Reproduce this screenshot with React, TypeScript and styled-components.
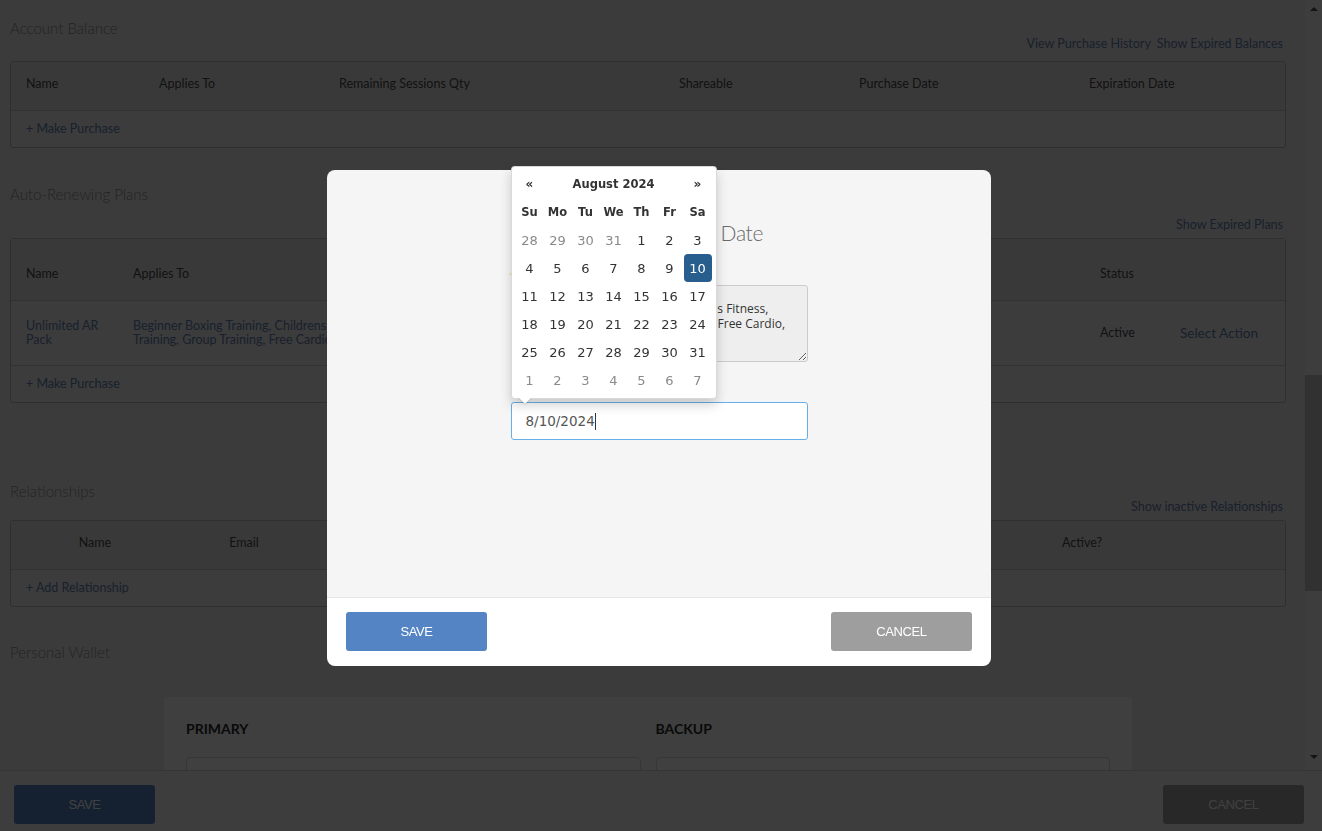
import styled, { createGlobalStyle } from 'styled-components'

const GlobalStyle = createGlobalStyle`
  * { box-sizing: border-box; }
  html, body { margin: 0; padding: 0; height: 100%; overflow: hidden; }
  body { font-family: Lato, "Liberation Sans", sans-serif; background: #ebebeb; }
`

const linkColor = '#5f82b2'

const weeks: number[][] = [
  [28, 29, 30, 31, 1, 2, 3],
  [4, 5, 6, 7, 8, 9, 10],
  [11, 12, 13, 14, 15, 16, 17],
  [18, 19, 20, 21, 22, 23, 24],
  [25, 26, 27, 28, 29, 30, 31],
  [1, 2, 3, 4, 5, 6, 7]
]
const dow = ['Su', 'Mo', 'Tu', 'We', 'Th', 'Fr', 'Sa']

function isOther(week: number, day: number) {
  return (week === 0 && day > 20) || (week === 5 && day < 8)
}

export default function App() {
  return (
    <>
      <GlobalStyle />
      <Page>
        <Main>
          <Content>
            <SectionHead $h={34}>
              <SectionTitle>Account Balance</SectionTitle>
              <HeadLinks>
                <Link>View Purchase History</Link>
                <Link>Show Expired Balances</Link>
              </HeadLinks>
            </SectionHead>
            <Table $mt={9}>
              <Row $cols="133px 180px 340px 180px 230px 1fr" $h={49} $head $pb={5}>
                <Cell>Name</Cell>
                <Cell>Applies To</Cell>
                <Cell>Remaining Sessions Qty</Cell>
                <Cell>Shareable</Cell>
                <Cell>Purchase Date</Cell>
                <Cell>Expiration Date</Cell>
              </Row>
              <Row $cols="1fr" $h={36}>
                <Cell $link>+ Make Purchase</Cell>
              </Row>
            </Table>

            <SectionHead $h={49} $mt={36}>
              <SectionTitle>Auto-Renewing Plans</SectionTitle>
              <HeadLinks>
                <Link>Show Expired Plans</Link>
              </HeadLinks>
            </SectionHead>
            <Table $mt={5}>
              <Row $cols="107px 967px 80px 1fr" $h={62} $head $pt={8}>
                <Cell>Name</Cell>
                <Cell>Applies To</Cell>
                <Cell>Status</Cell>
                <Cell />
              </Row>
              <Row $cols="107px 967px 80px 1fr" $h={65}>
                <Cell $link>
                  Unlimited AR
                  <br />
                  Pack
                </Cell>
                <Cell $link>
                  Beginner Boxing Training, Childrens Fitness, Personal
                  <br />
                  Training, Group Training, Free Cardio, Open Gym
                </Cell>
                <Cell>Active</Cell>
                <Cell $link $size={13.5}>
                  Select Action
                </Cell>
              </Row>
              <Row $cols="1fr" $h={36}>
                <Cell $link>+ Make Purchase</Cell>
              </Row>
            </Table>

            <SectionHead $h={34} $mt={78}>
              <SectionTitle>Relationships</SectionTitle>
              <HeadLinks>
                <Link>Show inactive Relationships</Link>
              </HeadLinks>
            </SectionHead>
            <Table $mt={5}>
              <Row $cols="168px 130px 713px 120px 1fr" $h={49} $head $pb={5}>
                <Cell $center>Name</Cell>
                <Cell $center>Email</Cell>
                <Cell />
                <Cell $center>Active?</Cell>
                <Cell />
              </Row>
              <Row $cols="1fr" $h={36}>
                <Cell $link>+ Add Relationship</Cell>
              </Row>
            </Table>

            <SectionHead $h={20} $mt={35}>
              <SectionTitle>Personal Wallet</SectionTitle>
            </SectionHead>
            <WalletPanel>
              <WalletColumn>
                <WalletLabel>Primary</WalletLabel>
                <WalletBox />
              </WalletColumn>
              <WalletColumn>
                <WalletLabel>Backup</WalletLabel>
                <WalletBox />
              </WalletColumn>
            </WalletPanel>
          </Content>
          <ScrollBar>
            <ScrollArrow $dir="up" />
            <ScrollTrack>
              <ScrollThumb $top={358} $h={216} />
            </ScrollTrack>
            <ScrollArrow $dir="down" />
          </ScrollBar>
        </Main>
        <BottomBar>
          <Button $variant="primary">Save</Button>
          <Button $variant="secondary">Cancel</Button>
        </BottomBar>
      </Page>

      <Overlay>
        <Modal>
          <ModalBody>
            <ModalTitle>Change Expiration Date</ModalTitle>
            <FieldColumn>
              <FieldLabel>Applies To</FieldLabel>
              <AppliesArea
                readOnly
                defaultValue={
                  'Beginner Boxing Training, Childrens Fitness,\nPersonal Training, Group Training, Free Cardio,\nOpen Gym'
                }
              />
              <FieldLabel $mt={14}>Expiration Date</FieldLabel>
              <DateField>
                <DateInput>
                  8/10/2024
                  <Caret />
                </DateInput>
                <Picker>
                  <PickerGrid>
                    <NavCell>«</NavCell>
                    <MonthCell>August 2024</MonthCell>
                    <NavCell>»</NavCell>
                    {dow.map((d) => (
                      <DowCell key={d}>{d}</DowCell>
                    ))}
                    {weeks.map((week, w) =>
                      week.map((day) => (
                        <DayCell key={w + '-' + day} $other={isOther(w, day)} $active={w === 1 && day === 10}>
                          {day}
                        </DayCell>
                      ))
                    )}
                  </PickerGrid>
                </Picker>
              </DateField>
            </FieldColumn>
          </ModalBody>
          <ModalFooter>
            <Button $variant="primary">Save</Button>
            <Button $variant="secondary">Cancel</Button>
          </ModalFooter>
        </Modal>
      </Overlay>
    </>
  )
}

const Page = styled.div`
  width: 1322px;
  height: 831px;
  display: flex;
  flex-direction: column;
  background: #ebebeb;
`

const Main = styled.div`
  flex: 1;
  display: flex;
  min-height: 0;
`

const Content = styled.div`
  flex: 1;
  overflow: hidden;
  padding: 18px 19px 0 10px;
`

const SectionHead = styled.div<{ $h: number; $mt?: number }>`
  height: ${(p) => p.$h}px;
  margin-top: ${(p) => p.$mt ?? 0}px;
  display: flex;
  justify-content: space-between;
`

const SectionTitle = styled.div`
  font-family: Lato, "Liberation Sans", sans-serif;
  font-weight: 300;
  font-size: 15px;
  line-height: 20px;
  color: #8c8c8c;
  align-self: flex-start;
`

const HeadLinks = styled.div`
  align-self: flex-end;
  display: flex;
  gap: 6px;
  padding-right: 3px;
`

const Link = styled.span`
  font-size: 12.5px;
  line-height: 16px;
  color: ${linkColor};
`

const Table = styled.div<{ $mt: number }>`
  margin-top: ${(p) => p.$mt}px;
  border: 1px solid #bcbcbc;
  border-radius: 3px;
  background: #efefef;
  overflow: hidden;
`

const Row = styled.div<{ $cols: string; $h: number; $head?: boolean; $pt?: number; $pb?: number }>`
  display: grid;
  grid-template-columns: ${(p) => p.$cols};
  align-items: center;
  height: ${(p) => p.$h}px;
  padding-top: ${(p) => p.$pt ?? 0}px;
  padding-bottom: ${(p) => p.$pb ?? 0}px;
  background: ${(p) => (p.$head ? '#e3e3e3' : 'transparent')};
  border-bottom: 1px solid #c6c6c6;
  &:last-child {
    border-bottom: none;
  }
`

const Cell = styled.div<{ $link?: boolean; $center?: boolean; $size?: number }>`
  padding-left: ${(p) => (p.$center ? 0 : 15)}px;
  text-align: ${(p) => (p.$center ? 'center' : 'left')};
  font-size: ${(p) => p.$size ?? 12.5}px;
  line-height: 14px;
  color: ${(p) => (p.$link ? linkColor : '#4a4a4a')};
  white-space: nowrap;
`

const WalletPanel = styled.div`
  width: 968px;
  margin: 35px auto 0;
  padding: 22px 22px 40px;
  background: #f9f9f9;
  display: grid;
  grid-template-columns: 1fr 1fr;
  column-gap: 15px;
`

const WalletColumn = styled.div`
  display: flex;
  flex-direction: column;
`

const WalletLabel = styled.div`
  font-weight: 700;
  font-size: 14px;
  line-height: 20px;
  text-transform: uppercase;
  color: #2a2a2a;
`

const WalletBox = styled.div`
  margin-top: 18px;
  height: 48px;
  border: 1px solid #d6d6d6;
  border-radius: 4px;
  background: #fff;
`

const ScrollBar = styled.div`
  width: 17px;
  display: flex;
  flex-direction: column;
  background: #f1f1f1;
  padding-bottom: 5px;
`

const ScrollArrow = styled.div<{ $dir: 'up' | 'down' }>`
  height: 17px;
  display: flex;
  align-items: center;
  justify-content: center;
  &::after {
    content: '';
    border-left: 4px solid transparent;
    border-right: 4px solid transparent;
    ${(p) => (p.$dir === 'up' ? 'border-bottom: 4px solid #505050;' : 'border-top: 4px solid #505050;')}
  }
`

const ScrollTrack = styled.div`
  flex: 1;
`

const ScrollThumb = styled.div<{ $top: number; $h: number }>`
  margin-top: ${(p) => p.$top}px;
  height: ${(p) => p.$h}px;
  background: #c1c1c1;
`

const BottomBar = styled.div`
  height: 61px;
  background: #f4f4f4;
  border-top: 1px solid #d4d4d4;
  padding: 14px 18px 0 14px;
  display: flex;
  justify-content: space-between;
  align-items: flex-start;
`

const Button = styled.button<{ $variant: 'primary' | 'secondary' }>`
  width: 141px;
  height: 39px;
  border: none;
  border-radius: 3px;
  background: ${(p) => (p.$variant === 'primary' ? '#5584c4' : '#9e9e9e')};
  color: #fff;
  font-family: "Liberation Sans", sans-serif;
  font-size: 13px;
  letter-spacing: -0.4px;
  text-transform: uppercase;
  padding: 0;
`

const Overlay = styled.div`
  position: fixed;
  inset: 0;
  background: rgba(0, 0, 0, 0.75);
  display: flex;
  justify-content: center;
  align-items: flex-start;
  padding: 170px 4px 0 0;
`

const Modal = styled.div`
  width: 664px;
  display: flex;
  flex-direction: column;
  border-radius: 8px;
`

const ModalBody = styled.div`
  height: 427px;
  background: #f5f5f5;
  border-radius: 8px 8px 0 0;
  padding-top: 48px;
  display: flex;
  flex-direction: column;
  align-items: center;
`

const ModalTitle = styled.div`
  font-family: Lato, "Liberation Sans", sans-serif;
  font-weight: 300;
  font-size: 21px;
  letter-spacing: -0.3px;
  line-height: 30px;
  color: #6a6a6a;
`

const FieldColumn = styled.div`
  width: 297px;
  display: flex;
  flex-direction: column;
`

const FieldLabel = styled.div<{ $mt?: number }>`
  margin-top: ${(p) => p.$mt ?? 13}px;
  font-size: 13px;
  font-weight: 700;
  line-height: 18px;
  color: #d08a2e;
`

const AppliesArea = styled.textarea`
  margin-top: 6px;
  width: 297px;
  height: 77px;
  padding: 15px 12px 4px 12px;
  background: #eeeeee;
  border: 1px solid #cccccc;
  border-radius: 3px;
  font-family: "Open Sans", sans-serif;
  font-size: 12px;
  line-height: 15px;
  color: #333;
  resize: vertical;
  overflow: hidden;
  outline: none;
`

const DateField = styled.div`
  position: relative;
  margin-top: 8px;
`

const DateInput = styled.div`
  height: 38px;
  border: 1px solid #66afe9;
  border-radius: 3px;
  background: #fff;
  padding: 0 14px;
  display: flex;
  align-items: center;
  font-family: "DejaVu Sans", sans-serif;
  font-size: 13.5px;
  color: #555;
`

const Caret = styled.span`
  display: inline-block;
  width: 1px;
  height: 17px;
  background: #333;
`

const Picker = styled.div`
  position: absolute;
  left: 0;
  bottom: calc(100% + 3px);
  width: 206px;
  padding: 3px 4px 4px;
  background: #fff;
  border: 1px solid rgba(0, 0, 0, 0.15);
  border-radius: 4px;
  box-shadow: 0 6px 12px rgba(0, 0, 0, 0.18);
  &::before {
    content: '';
    position: absolute;
    left: 6px;
    bottom: -7px;
    border-left: 7px solid transparent;
    border-right: 7px solid transparent;
    border-top: 7px solid rgba(0, 0, 0, 0.15);
  }
  &::after {
    content: '';
    position: absolute;
    left: 7px;
    bottom: -6px;
    border-left: 6px solid transparent;
    border-right: 6px solid transparent;
    border-top: 6px solid #fff;
  }
`

const PickerGrid = styled.div`
  display: grid;
  grid-template-columns: repeat(7, 1fr);
  grid-auto-rows: 28px;
  font-family: "DejaVu Sans", sans-serif;
`

const HeadCell = styled.div`
  display: flex;
  align-items: center;
  justify-content: center;
  font-weight: 700;
  font-size: 11.5px;
  color: #333;
`

const NavCell = styled(HeadCell)`
  font-size: 12px;
`

const MonthCell = styled(HeadCell)`
  grid-column: span 5;
`

const DowCell = styled(HeadCell)``

const DayCell = styled.div<{ $other?: boolean; $active?: boolean }>`
  display: flex;
  align-items: center;
  justify-content: center;
  font-size: 13px;
  border-radius: 4px;
  color: ${(p) => (p.$active ? '#fff' : p.$other ? '#8a8a8a' : '#333')};
  background: ${(p) => (p.$active ? '#285e8e' : 'transparent')};
`

const ModalFooter = styled.div`
  height: 69px;
  background: #fff;
  border-top: 1px solid #e5e5e5;
  border-radius: 0 0 8px 8px;
  padding: 14px 19px 0;
  display: flex;
  justify-content: space-between;
  align-items: flex-start;
`
